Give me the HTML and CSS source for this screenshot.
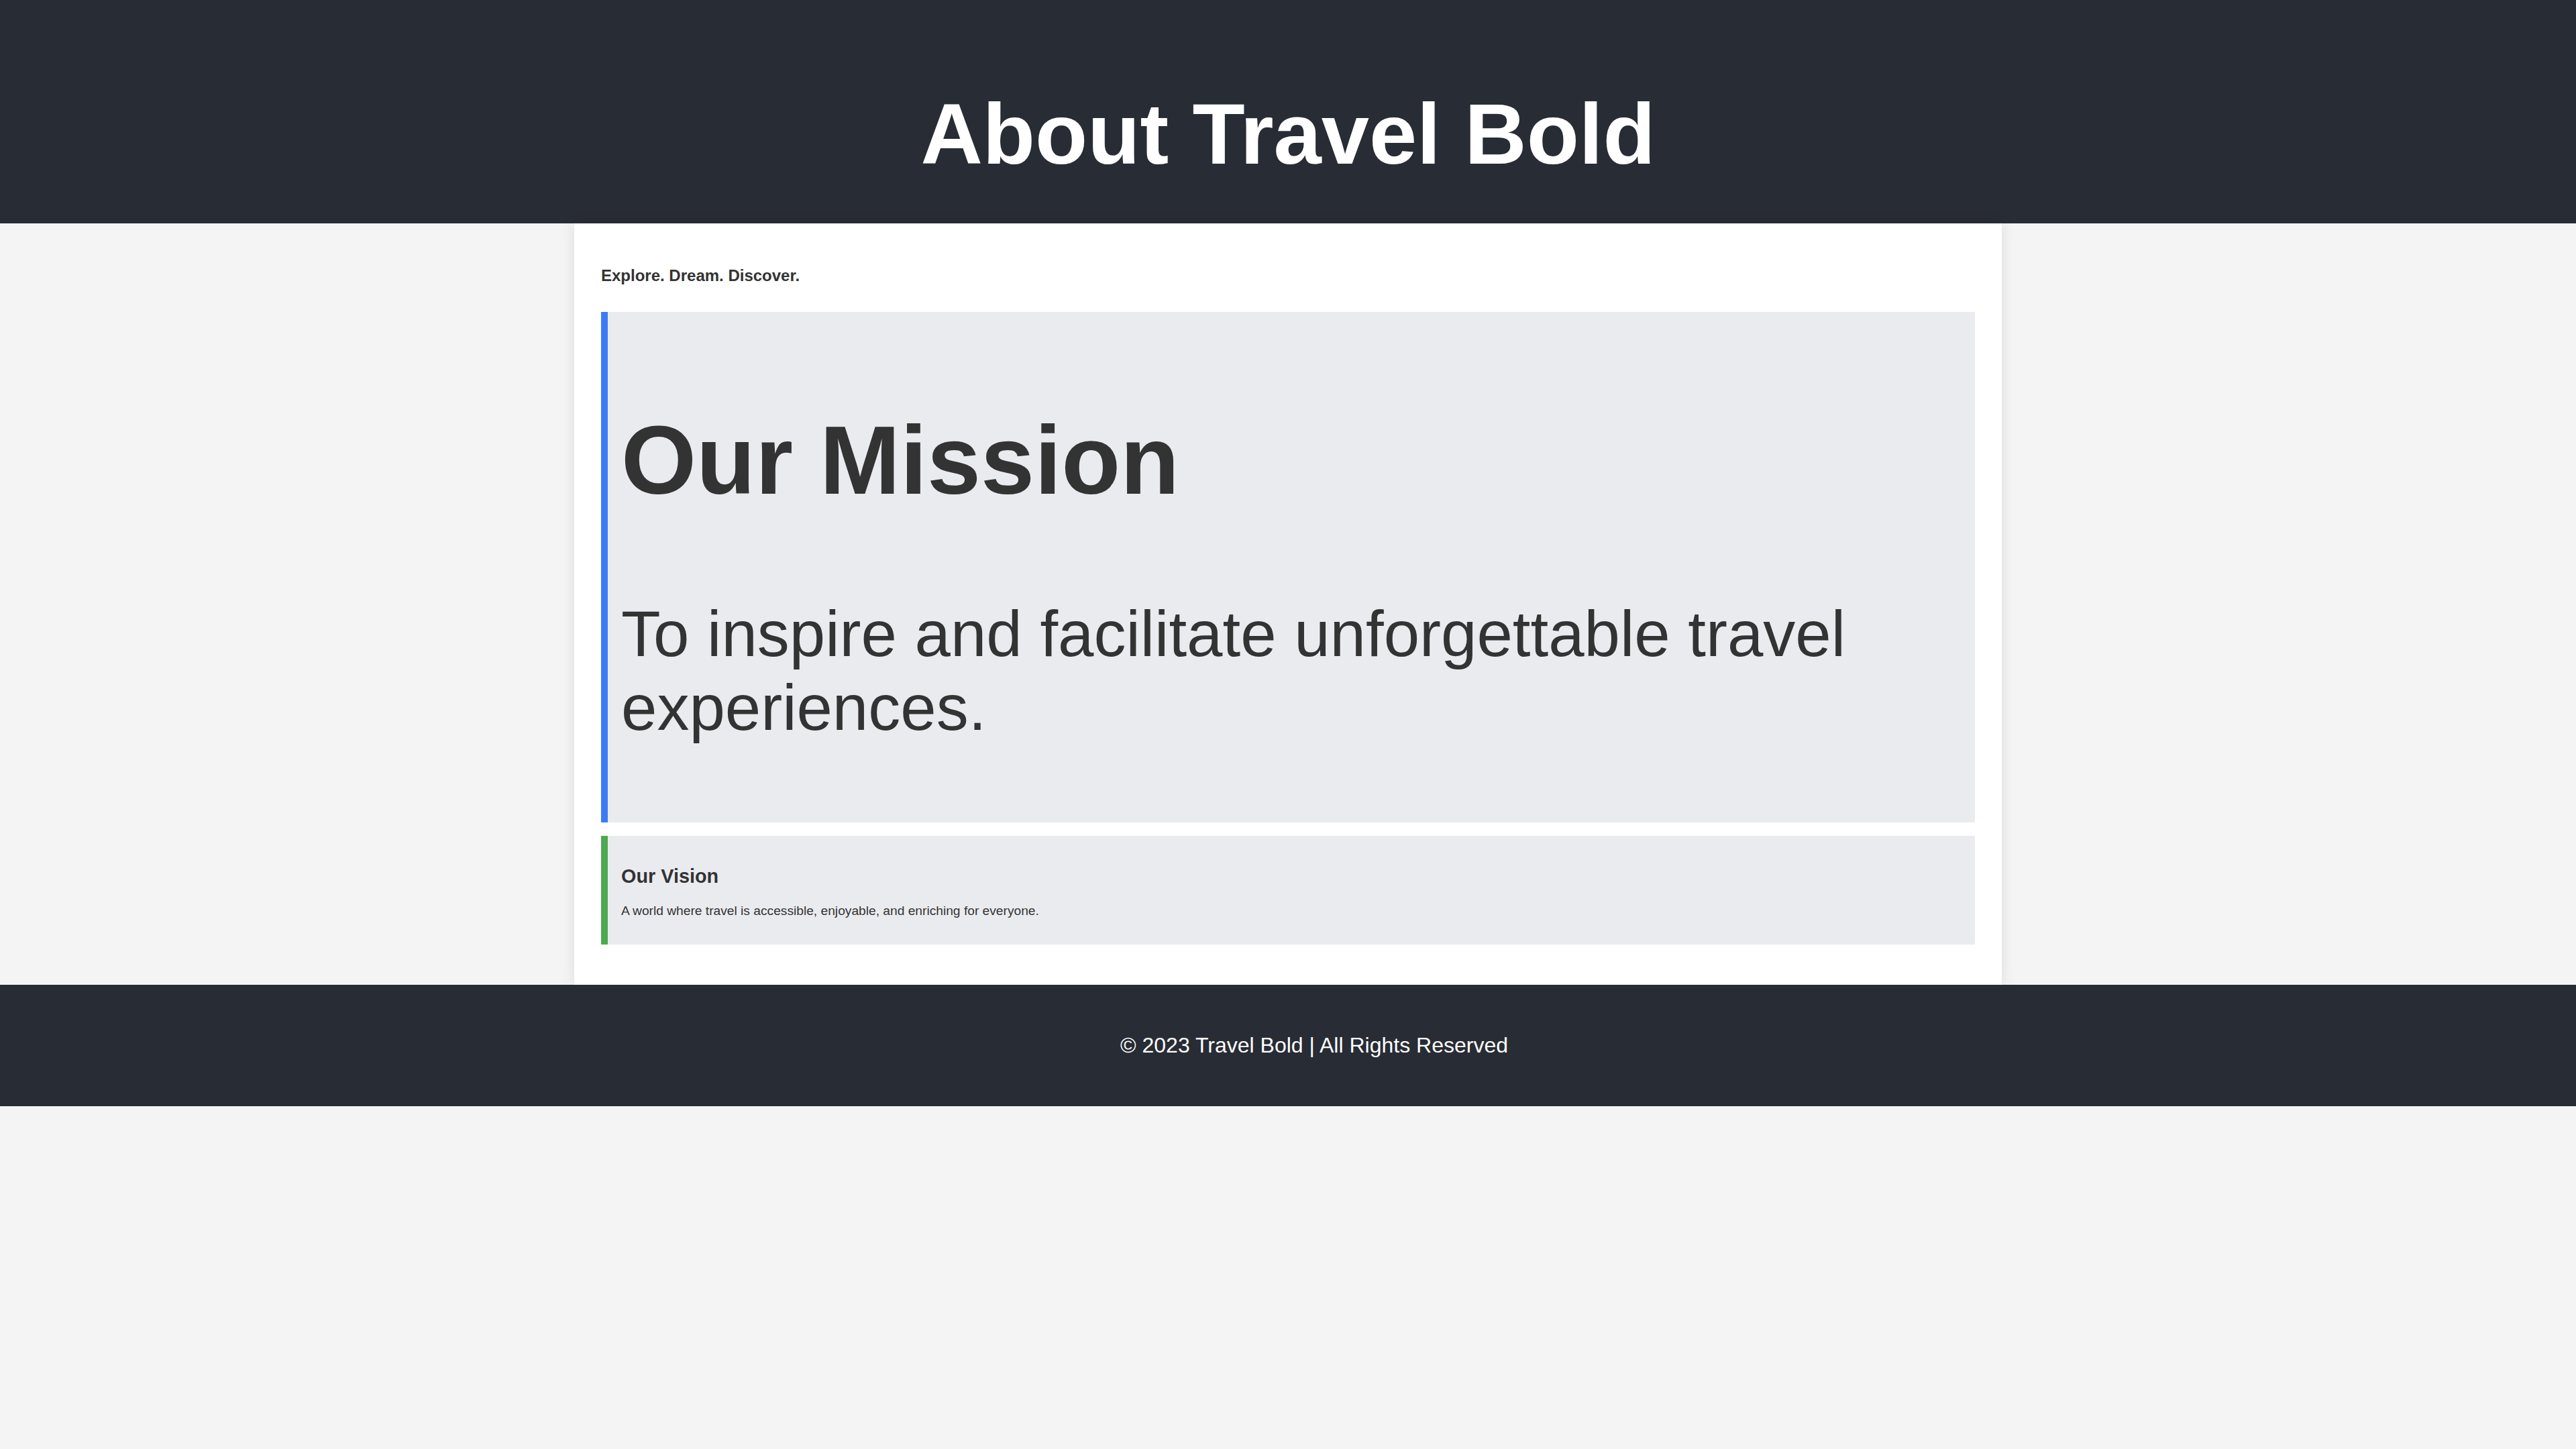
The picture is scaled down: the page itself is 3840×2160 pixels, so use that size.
FILE: index.html
```html
<!DOCTYPE html>
<html lang="en">
<head>
<meta charset="utf-8">
<title>About Travel Bold</title>
<link rel="stylesheet" href="styles.css">
</head>
<body>
<header class="site-header">
  <h1 class="site-title">About Travel Bold</h1>
</header>
<main class="card">
  <p class="tagline">Explore. Dream. Discover.</p>
  <section class="panel panel-mission">
    <h2 class="mission-title">Our Mission</h2>
    <p class="mission-text">To inspire and facilitate unforgettable travel experiences.</p>
  </section>
  <section class="panel panel-vision">
    <h2 class="vision-title">Our Vision</h2>
    <p class="vision-text">A world where travel is accessible, enjoyable, and enriching for everyone.</p>
  </section>
</main>
<footer class="site-footer">
  <p class="footer-text">&copy; 2023 Travel Bold | All Rights Reserved</p>
</footer>
</body>
</html>
```
FILE: styles.css
```css
html, body {
  margin: 0;
  padding: 0;
}

body {
  background: #f4f4f4;
  color: #333333;
  font-family: "Liberation Sans", Arial, Helvetica, sans-serif;
}

.site-header {
  background: #282c34;
  color: #ffffff;
  text-align: center;
  padding: 40px 0;
}

.site-title {
  font-size: 128px;
  font-weight: bold;
  margin: 0.67em 0 20px;
}

.card {
  display: block;
  max-width: 2048px;
  margin: 0 auto;
  padding: 40px;
  background: #ffffff;
  box-shadow: 0 0 20px rgba(0, 0, 0, 0.1);
}

.tagline {
  font-size: 24px;
  font-weight: bold;
  margin: 24px 0 40px;
}

.panel {
  background: #eaebef;
  border-left: 10px solid #3b7cf6;
  padding: 20px;
  margin: 0 0 20px;
}

.panel-vision {
  border-left-color: #4fa852;
}

.mission-title {
  font-size: 144px;
  font-weight: bold;
  margin: 0.83em 0;
}

.mission-text {
  font-size: 96px;
  margin: 1em 0;
}

.vision-title {
  font-size: 28.8px;
  font-weight: bold;
  margin: 0.83em 0;
}

.vision-text {
  font-size: 19.2px;
  margin: 1em 0;
}

.site-footer {
  background: #282c34;
  color: #ffffff;
  text-align: center;
  padding: 40px 0 40px 78px;
}

.footer-text {
  font-size: 32px;
  margin: 1em 0;
}
```
